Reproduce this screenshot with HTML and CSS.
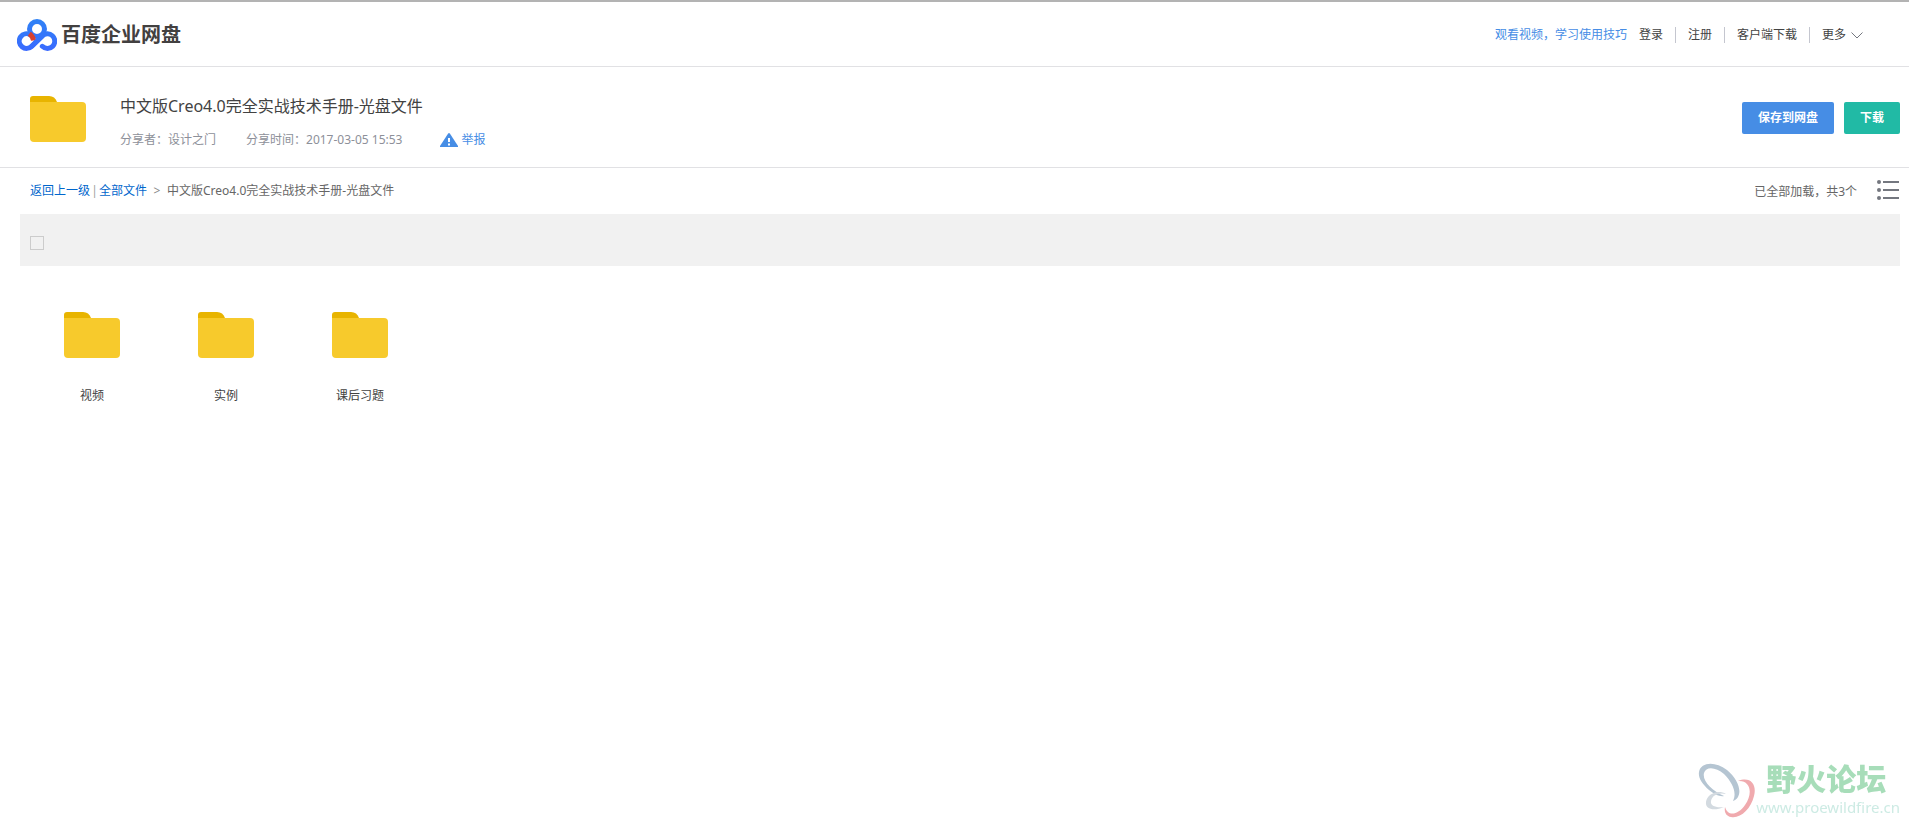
FILE: index.html
```html
<!DOCTYPE html>
<html lang="zh-CN">
<head>
<meta charset="utf-8">
<title>百度企业网盘</title>
<link rel="stylesheet" href="styles.css">
</head>
<body>
<svg class="defs" aria-hidden="true">
  <symbol id="folder" viewBox="0 0 56 46">
    <path fill="#e8b400" d="M0 10V3Q0 0 3 0H19Q25 0 27 6L28 10Z"/>
    <path fill="#f7ca2c" d="M0 6H52Q56 6 56 10V42Q56 46 52 46H4Q0 46 0 42Z"/>
  </symbol>
</svg>
<header class="topbar">
  <a class="brand" href="#">
    <svg class="brand-mark" viewBox="0 0 40 32" aria-hidden="true">
      <defs><linearGradient id="blue" x1="0" y1="0" x2="0" y2="32" gradientUnits="userSpaceOnUse"><stop offset="0" stop-color="#2f82f5"/><stop offset="1" stop-color="#3a6aff"/></linearGradient></defs>
      <g fill="none" stroke="url(#blue)" stroke-width="5">
        <circle cx="20" cy="10" r="7.5"/>
        <path stroke-linecap="round" d="M25.300 27.300A7.300 7.300 0 1 0 25 17.300L15 27A7.300 7.300 0 1 1 13.500 15.900"/>
        <path stroke="#d8412f" d="M12.300 14.800Q16 17.500 16.500 21.500"/>
        <path stroke-linecap="round" d="M25 17.300L15 27"/>
      </g>
    </svg>
    <span class="brand-name">百度企业网盘</span>
  </a>
  <nav class="nav">
    <a class="tips" href="#">观看视频，学习使用技巧</a>
    <a href="#">登录</a>
    <a class="split" href="#">注册</a>
    <a class="split" href="#">客户端下载</a>
    <a class="split more" href="#">更多<svg class="chevron" viewBox="0 0 12 7" aria-hidden="true"><path d="M.5.500 6 6 11.500.500"/></svg></a>
  </nav>
</header>
<main>
  <section class="share">
    <svg class="folder" aria-hidden="true"><use href="#folder"/></svg>
    <div class="details">
      <h1>中文版Creo4.0完全实战技术手册-光盘文件</h1>
      <div class="meta">
        <span>分享者：设计之门</span>
        <span>分享时间：2017-03-05 15:53</span>
        <a class="report" href="#"><svg class="warning" viewBox="0 0 18 14" aria-hidden="true"><path fill="#468de5" d="M8 .8Q9-.6 10 .8L18 13V14H0V13Z"/><path fill="#fff" d="M8 5h2v4H8zM8 10.500h2v2H8z"/></svg>举报</a>
      </div>
    </div>
    <div class="actions">
      <button class="save" type="button">保存到网盘</button>
      <button class="download" type="button">下载</button>
    </div>
  </section>
  <div class="pathbar">
    <nav class="crumbs">
      <a href="#">返回上一级</a><span class="bar">|</span><a href="#">全部文件</a><span class="gt">&gt;</span><span>中文版Creo4.0完全实战技术手册-光盘文件</span>
    </nav>
    <span class="count">已全部加载，共3个</span>
    <button class="view" type="button" aria-label="列表模式">
      <svg viewBox="0 0 22 20" aria-hidden="true"><g fill="#74777f"><circle cx="2" cy="2" r="2"/><circle cx="2" cy="10" r="2"/><circle cx="2" cy="18" r="2"/><path d="M6 1h16v2H6zM6 9h16v2H6zM6 17h16v2H6z"/></g></svg>
    </button>
  </div>
  <div class="selectbar"><input type="checkbox" aria-label="全选"></div>
  <ul class="files">
    <li><a href="#"><svg class="folder" aria-hidden="true"><use href="#folder"/></svg>视频</a></li>
    <li><a href="#"><svg class="folder" aria-hidden="true"><use href="#folder"/></svg>实例</a></li>
    <li><a href="#"><svg class="folder" aria-hidden="true"><use href="#folder"/></svg>课后习题</a></li>
  </ul>
</main>
<aside class="watermark">
  <svg class="rings" viewBox="0 0 58 56" aria-hidden="true">
    <path fill="#b5c5d2" fill-rule="evenodd" d="M1 9C3-1 17-2 29 7C39 15 44 27 40 34C38 37 37 37 35 38C39 30 35 20 26 11C18 4 8 3 6 10C4 18 14 28 26 33C22 34 16 31 11 27C4 21 0 15 1 9Z"/>
    <path fill="#f0aaae" d="M40 18C53 13 59 22 56 33C53 46 42 56 33 54C28 53 26 49 27 44C30 54 40 52 47 42C55 31 53 17 40 18Z"/>
    <path fill="#d3dae0" d="M28 31C20 26 9 31 8 39C7 47 17 48 26 44C18 45 12 43 13 38C14 32 21 29 28 31Z"/>
  </svg>
  <div class="forum"><strong>野火论坛</strong><span>www.proewildfire.cn</span></div>
</aside>
</body>
</html>
```
FILE: styles.css
```css
* { box-sizing: border-box; }
body {
  margin: 0;
  min-height: 100vh;
  background: #fff;
  color: #666;
  font: 12px/20px "Noto Sans", "Noto Sans CJK SC", sans-serif;
}
a { color: inherit; text-decoration: none; }
svg { display: block; flex: none; }
button { border: 0; padding: 0; font: inherit; cursor: pointer; }
.defs { position: absolute; width: 0; height: 0; }

.topbar {
  display: flex;
  align-items: center;
  justify-content: space-between;
  height: 67px;
  padding: 2px 46px 0 17px;
  border-top: 2px solid #b3b3b3;
  border-bottom: 1px solid #e1e1e4;
}
.brand { display: flex; align-items: center; gap: 4px; }
.brand-mark { width: 40px; height: 32px; }
.brand-name { color: #424040; font-size: 20px; font-weight: 600; line-height: 24px; }
.nav { display: flex; align-items: center; gap: 12px; color: #424242; }
.tips { color: #468de5; }
.split { display: flex; align-items: center; }
.split::before { content: ""; width: 1px; height: 16px; margin-right: 12px; background: #c4c6cf; }
.chevron { width: 12px; height: 7px; margin-left: 5px; fill: none; stroke: #74777f; stroke-width: 1; }

.share {
  display: flex;
  align-items: center;
  height: 101px;
  padding: 4px 9px 0 30px;
  border-bottom: 1px solid #e1e1e4;
}
.folder { width: 56px; height: 46px; }
.details { flex: 1; padding: 5px 0 0 34px; }
h1 { margin: 0 0 12px; color: #424242; font-size: 16px; font-weight: 400; line-height: 24px; }
.meta { display: flex; gap: 30px; color: #8d9099; line-height: 20px; }
.report { display: flex; align-items: center; gap: 3px; margin-left: 8px; color: #468de5; }
.warning { width: 18px; height: 14px; }
.actions { display: flex; gap: 10px; padding-bottom: 2px; }
.actions button { height: 32px; border-radius: 2px; color: #fff; font-weight: 600; }
.save { width: 92px; background: #468de5; }
.download { width: 56px; background: #21baa5; }

.pathbar { display: flex; align-items: center; height: 46px; padding: 0 10px 0 30px; }
.crumbs { display: flex; flex: 1; }
.crumbs a { color: #0066cc; }
.bar { width: 9px; color: #a0a0a0; text-align: center; }
.gt { width: 20px; color: #888; text-align: center; }
.count { margin-right: 20px; padding-top: 2px; }
.view { width: 22px; height: 20px; margin-bottom: 2px; background: none; }

.selectbar { display: flex; align-items: center; height: 52px; margin: 0 9px 0 20px; padding: 5px 10px 0; background: #f1f1f1; }
.selectbar input { appearance: none; width: 14px; height: 14px; margin: 0; border: 1px solid #ccc; }
.files { display: flex; flex-wrap: wrap; margin: 0; padding: 46px 25px; list-style: none; }
.files a { display: flex; flex-direction: column; align-items: center; gap: 28px; width: 134px; color: #424242; }

.watermark { position: fixed; right: 9px; bottom: 6px; display: flex; align-items: flex-start; }
.rings { width: 58px; height: 56px; }
.forum { display: flex; flex-direction: column; color: #cdebe4; font-size: 15px; line-height: 24px; }
.forum strong { padding-left: 10px; color: #a7ddb9; font-size: 30px; font-weight: 900; line-height: 32px; }
```
